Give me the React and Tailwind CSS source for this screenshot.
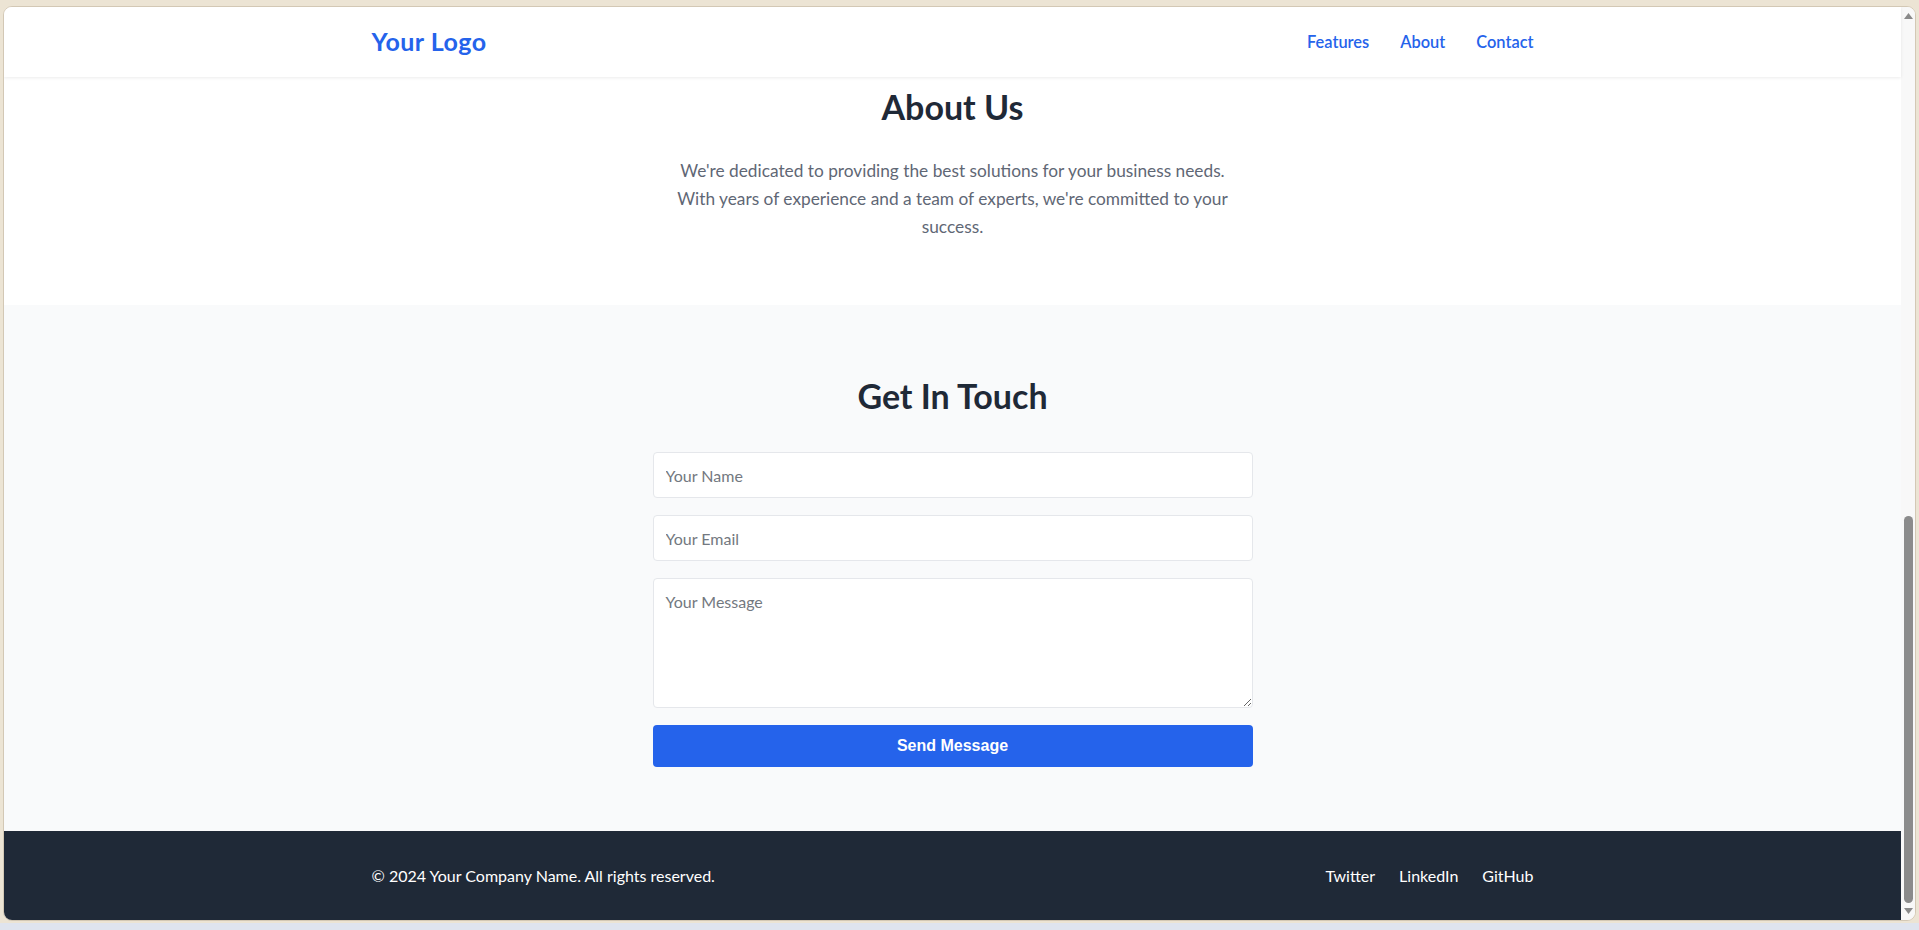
import React from "react";

function ScrollArrow({ down }) {
  return (
    <svg width="9" height="6" viewBox="0 0 9 6" className="block">
      {down ? (
        <polygon points="0,0 9,0 4.5,6" fill="#8a8a8a" />
      ) : (
        <polygon points="4.5,0 9,6 0,6" fill="#8a8a8a" />
      )}
    </svg>
  );
}

function Header() {
  return (
    <header className="relative z-10 h-[70px] shrink-0 bg-white shadow-[0_1px_3px_rgba(0,0,0,0.08)]">
      <div className="mx-auto flex h-full w-full max-w-[1162px] items-center justify-between">
        <a href="#" className="text-[25px] font-bold tracking-[0.02em] text-[#2563eb]">
          Your Logo
        </a>
        <nav className="flex items-center gap-[31px] text-[16.4px] font-semibold text-[#2563eb]">
          <a href="#features">Features</a>
          <a href="#about">About</a>
          <a href="#contact">Contact</a>
        </nav>
      </div>
    </header>
  );
}

function About() {
  return (
    <section id="about" className="shrink-0 bg-white pt-[10px] pb-16 text-center">
      <h2 className="text-[34px] leading-[40px] font-bold text-[#1f2937]">About Us</h2>
      <p className="mx-auto mt-[30px] max-w-xl text-[17.3px] leading-[28px] text-[#5f6775]">
        We're dedicated to providing the best solutions for your business needs.
        With years of experience and a team of experts, we're committed to your
        success.
      </p>
    </section>
  );
}

function Contact() {
  return (
    <section id="contact" className="shrink-0 bg-[#f9fafb] pt-[71px] pb-16">
      <h2 className="text-center text-[34px] leading-[40px] font-bold text-[#1f2937]">
        Get In Touch
      </h2>
      <form className="mx-auto mt-9 flex w-[600px] flex-col gap-[17px]">
        <input
          type="text"
          placeholder="Your Name"
          className="h-[46px] rounded border border-gray-200 bg-white px-3 text-[16px] text-gray-800 placeholder:text-[#737880] outline-none"
        />
        <input
          type="email"
          placeholder="Your Email"
          className="h-[46px] rounded border border-gray-200 bg-white px-3 text-[16px] text-gray-800 placeholder:text-[#737880] outline-none"
        />
        <textarea
          placeholder="Your Message"
          className="block h-[130px] rounded border border-gray-200 bg-white px-3 pt-[11px] text-[16px] leading-6 text-gray-800 placeholder:text-[#737880] outline-none"
        />
        <button
          type="button"
          className="h-[42px] rounded bg-[#2563eb] font-['Liberation_Sans',Arial,sans-serif] text-[16px] font-bold text-white"
        >
          Send Message
        </button>
      </form>
    </section>
  );
}

function Footer() {
  return (
    <footer className="flex-1 bg-[#1f2937] text-white">
      <div className="mx-auto flex h-full w-full max-w-[1162px] items-center justify-between text-[16px]">
        <p>© 2024 Your Company Name. All rights reserved.</p>
        <div className="flex items-center gap-6">
          <a href="#">Twitter</a>
          <a href="#">LinkedIn</a>
          <a href="#">GitHub</a>
        </div>
      </div>
    </footer>
  );
}

export default function App() {
  return (
    <div className="flex h-[930px] w-full flex-col overflow-hidden bg-[#ece4d4] font-['Lato','Noto_Sans',sans-serif]">
      <div className="mx-[3px] mt-[6px] flex h-[915px] overflow-hidden rounded-[9px] border border-[#d3c8b5] bg-white">
        <div className="flex min-w-0 flex-1 flex-col">
          <Header />
          <About />
          <Contact />
          <Footer />
        </div>
        <div className="flex w-[14px] shrink-0 flex-col items-center bg-[#f8f8f8]">
          <div className="mt-[6px]">
            <ScrollArrow />
          </div>
          <div className="flex-1" />
          <div className="h-[387px] w-[9px] rounded-full bg-[#8b8b8b]" />
          <div className="mt-[5px] mb-[6px]">
            <ScrollArrow down />
          </div>
        </div>
      </div>
      <div className="mt-auto h-[7px] bg-[#dfe4ee]" />
    </div>
  );
}
